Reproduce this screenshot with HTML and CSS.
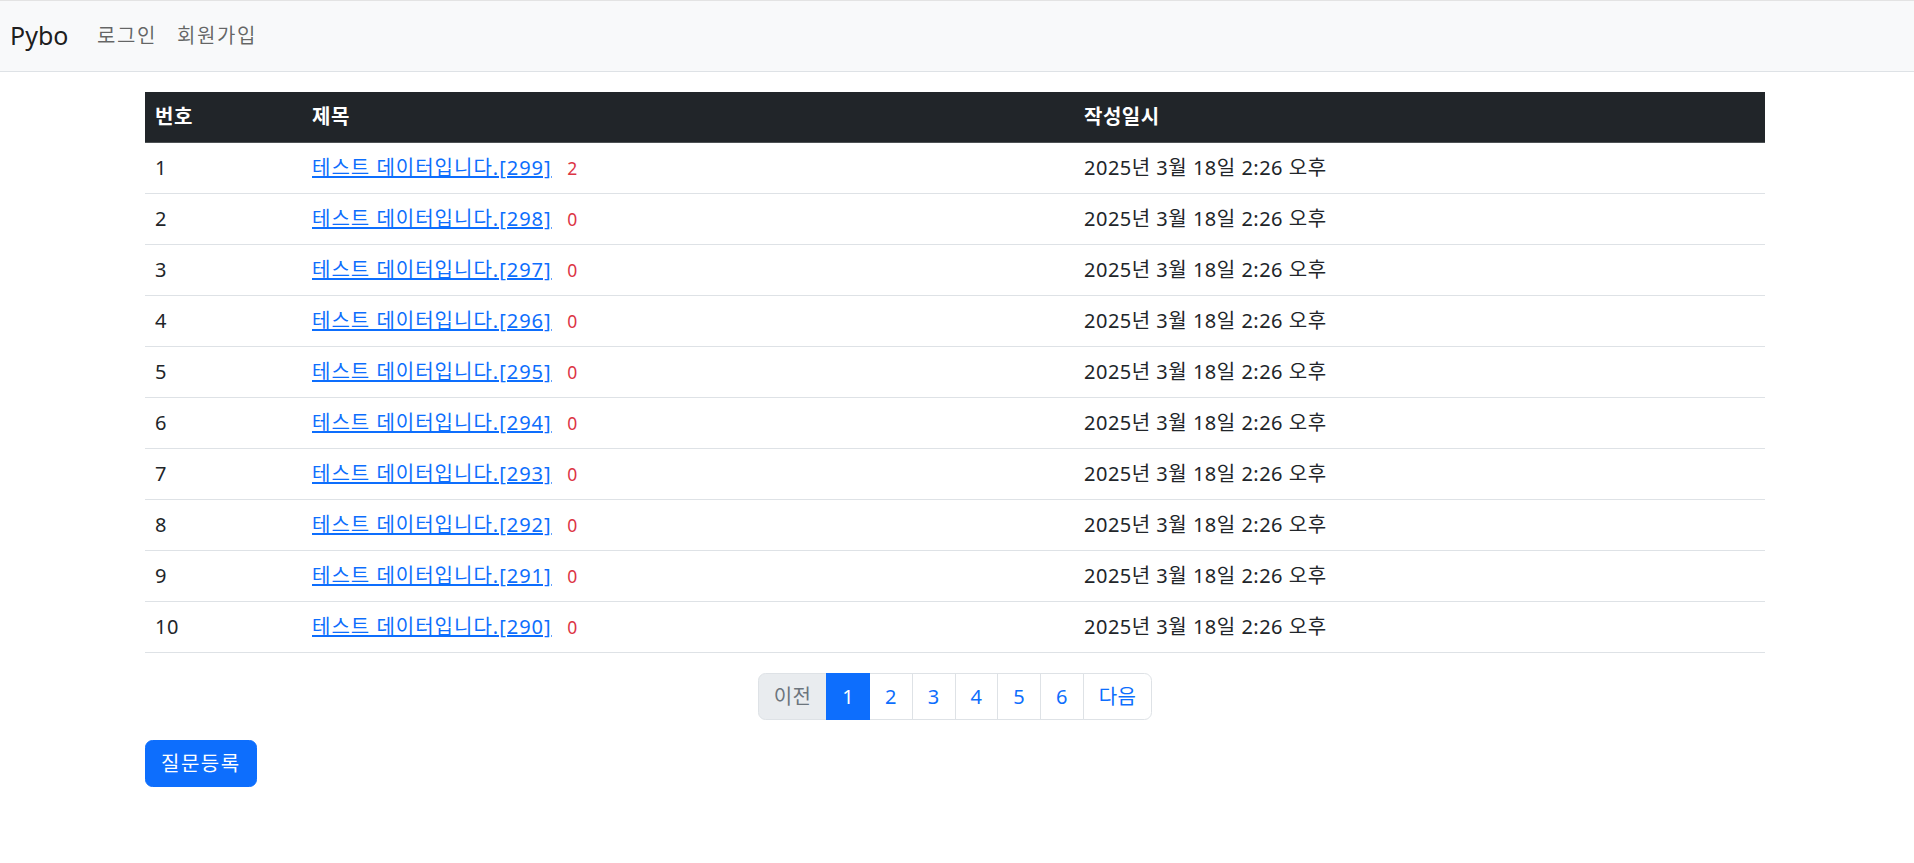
FILE: index.html
```html
<!DOCTYPE html>
<html lang="ko">
<head>
<meta charset="utf-8">
<title>Pybo</title>
<link rel="stylesheet" href="styles.css">
</head>
<body>
<nav class="navbar">
  <a class="brand" href="#">Pybo</a>
  <ul class="nav">
    <li><a class="nav-link" href="#">로그인</a></li>
    <li><a class="nav-link" href="#">회원가입</a></li>
  </ul>
</nav>
<main class="container">
  <table class="table">
    <thead>
      <tr><th class="c-num">번호</th><th class="c-title">제목</th><th class="c-date">작성일시</th></tr>
    </thead>
    <tbody>
      <tr><td>1</td><td><a href="#">테스트 데이터입니다.[299]</a> <span class="count">2</span></td><td>2025년 3월 18일 2:26 오후</td></tr>
      <tr><td>2</td><td><a href="#">테스트 데이터입니다.[298]</a> <span class="count">0</span></td><td>2025년 3월 18일 2:26 오후</td></tr>
      <tr><td>3</td><td><a href="#">테스트 데이터입니다.[297]</a> <span class="count">0</span></td><td>2025년 3월 18일 2:26 오후</td></tr>
      <tr><td>4</td><td><a href="#">테스트 데이터입니다.[296]</a> <span class="count">0</span></td><td>2025년 3월 18일 2:26 오후</td></tr>
      <tr><td>5</td><td><a href="#">테스트 데이터입니다.[295]</a> <span class="count">0</span></td><td>2025년 3월 18일 2:26 오후</td></tr>
      <tr><td>6</td><td><a href="#">테스트 데이터입니다.[294]</a> <span class="count">0</span></td><td>2025년 3월 18일 2:26 오후</td></tr>
      <tr><td>7</td><td><a href="#">테스트 데이터입니다.[293]</a> <span class="count">0</span></td><td>2025년 3월 18일 2:26 오후</td></tr>
      <tr><td>8</td><td><a href="#">테스트 데이터입니다.[292]</a> <span class="count">0</span></td><td>2025년 3월 18일 2:26 오후</td></tr>
      <tr><td>9</td><td><a href="#">테스트 데이터입니다.[291]</a> <span class="count">0</span></td><td>2025년 3월 18일 2:26 오후</td></tr>
      <tr><td>10</td><td><a href="#">테스트 데이터입니다.[290]</a> <span class="count">0</span></td><td>2025년 3월 18일 2:26 오후</td></tr>
    </tbody>
  </table>
  <ul class="pagination">
    <li class="page-item disabled"><span class="page-link">이전</span></li>
    <li class="page-item active"><a class="page-link" href="#">1</a></li>
    <li class="page-item"><a class="page-link" href="#">2</a></li>
    <li class="page-item"><a class="page-link" href="#">3</a></li>
    <li class="page-item"><a class="page-link" href="#">4</a></li>
    <li class="page-item"><a class="page-link" href="#">5</a></li>
    <li class="page-item"><a class="page-link" href="#">6</a></li>
    <li class="page-item"><a class="page-link" href="#">다음</a></li>
  </ul>
  <a class="btn" href="#">질문등록</a>
</main>
</body>
</html>
```

FILE: styles.css
```css
* { box-sizing: border-box; }
html, body { margin: 0; padding: 0; }
body {
  font-family: "Noto Sans", "Noto Sans CJK KR", sans-serif;
  font-size: 20px;
  line-height: 1.5;
  color: #212529;
  background: #fff;
  letter-spacing: 0.5px;
}
a { color: #0d6efd; }

.navbar {
  display: flex;
  align-items: center;
  height: 72px;
  padding: 0 10px;
  background: #f8f9fa;
  border-top: 1px solid #e3e3e3;
  border-bottom: 1px solid #dee2e6;
}
.brand {
  font-size: 25px;
  line-height: 37.5px;
  color: rgba(0,0,0,.9);
  text-decoration: none;
  margin-right: 18.5px;
  letter-spacing: 0;
}
.nav {
  display: flex;
  list-style: none;
  margin: 0;
  padding: 0;
}
.nav-link {
  display: block;
  padding: 10px 10px;
  color: rgba(0,0,0,.6);
  text-decoration: none;
  letter-spacing: 1.6px;
}

.container {
  width: 1620px;
  margin: 20px 0 0 calc(50% - 812px);
}

.table {
  width: 100%;
  border-collapse: collapse;
  margin-bottom: 20px;
  table-layout: fixed;
}
.table th, .table td {
  padding: 10px 10px;
  text-align: left;
  vertical-align: top;
  border-bottom: 1px solid #dee2e6;
  height: 51px;
}
.table thead th {
  background: #212529;
  color: #fff;
  font-weight: 700;
  border-bottom: 1px solid #4d5154;
  height: 50px;
}
.table td a { letter-spacing: 1px; }
.c-num { width: 157px; }
.c-title { width: 772px; }
.c-date { width: auto; }
.count {
  color: #dc3545;
  font-size: 17.5px;
  margin: 0 10px;
}

.pagination {
  display: flex;
  justify-content: center;
  list-style: none;
  margin: 0 0 20px;
  padding: 0;
}
.page-item { display: block; }
.page-link {
  display: block;
  padding: 7.5px 15px;
  line-height: 30px;
  border: 1px solid #dee2e6;
  margin-left: -1px;
  color: #0d6efd;
  background: #fff;
  text-decoration: none;
  letter-spacing: 0.3px;
}
.page-item:first-child .page-link {
  margin-left: 0;
  border-radius: 7.5px 0 0 7.5px;
}
.page-item:last-child .page-link { border-radius: 0 7.5px 7.5px 0; }
.page-item.disabled .page-link {
  color: #6c757d;
  background: #e9ecef;
}
.page-item.active .page-link {
  position: relative;
  color: #fff;
  background: #0d6efd;
  border-color: #0d6efd;
}

.btn {
  display: inline-block;
  padding: 7.5px 15px;
  line-height: 30px;
  color: #fff;
  background: #0d6efd;
  border: 1px solid #0d6efd;
  border-radius: 7.5px;
  text-decoration: none;
  letter-spacing: 1.5px;
}
```
